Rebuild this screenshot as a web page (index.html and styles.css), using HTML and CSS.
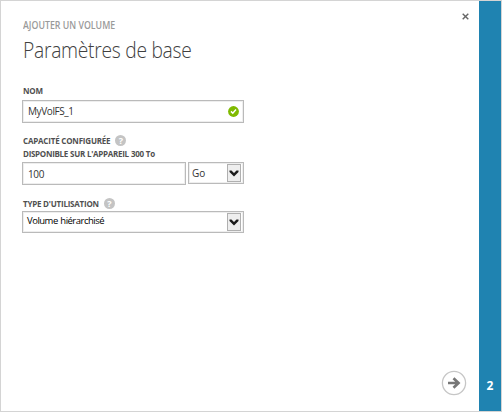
FILE: index.html
```html
<!DOCTYPE html>
<html lang="fr">
<head>
<meta charset="utf-8">
<title>Ajouter un volume</title>
<link rel="stylesheet" href="styles.css">
</head>
<body>
<div class="dialog">
  <main class="content">
    <header class="header">
      <p class="subtitle"><span>AJOUTER UN VOLUME</span></p>
      <h1 class="title"><span>Paramètres de base</span></h1>
    </header>
    <form class="form">
      <div class="label label-name"><span>NOM</span></div>
      <div class="field">
        <span class="value value-name">MyVolFS_1</span>
        <svg class="valid" viewBox="0 0 11 11"><circle cx="5.5" cy="5.5" r="5.4" fill="#7fba00"/><path d="M3 5.4l1.8 1.8L8 3.6" fill="none" stroke="#fff" stroke-width="1.5"/></svg>
      </div>
      <div class="label label-capacity"><span>CAPACITÉ CONFIGURÉE</span><i class="help">?</i></div>
      <div class="label label-available"><span>DISPONIBLE SUR L'APPAREIL 300 To</span></div>
      <div class="row">
        <div class="field amount"><span class="value value-amount">100</span></div>
        <div class="field select unit">
          <span class="value value-unit">Go</span>
          <span class="arrow"><svg viewBox="0 0 10 7"><path d="M.5.5h2L5 2.9 7.5.5h2v1.6L5 6.4.5 2.1z" fill="#1c1c1c"/></svg></span>
        </div>
      </div>
      <div class="label label-usage"><span>TYPE D'UTILISATION</span><i class="help">?</i></div>
      <div class="field select usage">
        <span class="value value-usage">Volume hiérarchisé</span>
        <span class="arrow"><svg viewBox="0 0 10 7"><path d="M.5.5h2L5 2.9 7.5.5h2v1.6L5 6.4.5 2.1z" fill="#1c1c1c"/></svg></span>
      </div>
    </form>
  </main>
  <aside class="controls">
    <svg class="close" viewBox="0 0 7 7"><path d="M.7.7l5.6 5.6M6.3.7L.7 6.3" stroke="#666" stroke-width="1.4"/></svg>
    <svg class="next" viewBox="0 0 26 26"><circle cx="13" cy="13" r="11.6" fill="#fff" stroke="#c6c6c6" stroke-width="1.3"/><path d="M7 13h11M12.5 8.2l5 4.8-5 4.8" fill="none" stroke="#777" stroke-width="2.7"/></svg>
  </aside>
  <div class="step">2</div>
</div>
</body>
</html>
```
FILE: styles.css
```css
* { box-sizing: border-box; }
body { margin: 0; font-family: "Open Sans", "Noto Sans", sans-serif; background: #fff; }
.dialog { display: flex; width: 502px; height: 412px; border: 1px solid #d4d4d4; }
.content { width: 243px; padding: 18px 0 0 21px; }
.subtitle, .title { margin: 0; white-space: nowrap; }
.subtitle span, .title span { display: inline-block; transform-origin: 0 50%; }
.subtitle { height: 13px; font-size: 10px; line-height: 13px; font-weight: 600; color: #9a9a9a; padding-left: 1px; }
.subtitle span { transform: scaleX(0.88); }
.title { height: 32px; margin-top: 2px; padding-left: 1px; font-size: 21.5px; line-height: 32px; font-weight: 300; color: #404040; letter-spacing: -0.3px; }
.title span { transform: scaleX(0.895); }
.form { padding-top: 18px; width: 222px; }
.label { display: flex; align-items: center; height: 13px; padding-left: 1px; font-size: 8px; line-height: 13px; font-weight: 700; color: #505050; white-space: nowrap; }
.label-name { margin-bottom: 3px; letter-spacing: -0.2px; }
.label-capacity { margin-top: 11px; letter-spacing: -0.2px; }
.label-available { margin-bottom: 2px; letter-spacing: -0.29px; word-spacing: 0.3px; }
.label-usage { margin-top: 12px; margin-bottom: 1px; letter-spacing: -0.22px; }
.help { width: 11px; height: 11px; margin-left: 5px; border-radius: 50%; background: #c4c4c4; color: #fff; font-size: 9px; line-height: 11px; font-style: normal; text-align: center; letter-spacing: 0; }
.field { display: flex; align-items: center; justify-content: space-between; height: 23px; border: 1px solid #bababa; box-shadow: inset 0 0 0 1px #eee; background: #fff; padding: 0 4px 0 5px; }
.value { font-size: 10px; color: #333; white-space: nowrap; }
.value-name { letter-spacing: -0.4px; padding-bottom: 1px; }
.value-amount { letter-spacing: -0.35px; }
.valid { width: 11px; height: 11px; }
.row { display: flex; gap: 2px; }
.amount { width: 164px; }
.unit { width: 56px; }
.select { height: 22px; padding: 0 2px 0 3px; }
.arrow { display: flex; align-items: center; justify-content: center; width: 14px; height: 18px; border: 1px solid #b0b0b0; background: #eee; }
.arrow svg { width: 10px; height: 7px; }
.usage { padding-left: 4px; }
.value-usage { color: #000; font-size: 9.5px; letter-spacing: -0.5px; word-spacing: 0.6px; padding-bottom: 3px; }
.controls { display: flex; flex-direction: column; justify-content: space-between; align-items: flex-end; flex: 1; padding: 12px 12px 15px 0; }
.close { width: 7px; height: 7px; margin-right: -2px; }
.next { width: 26px; height: 26px; }
.step { display: flex; align-items: flex-end; justify-content: center; width: 22px; padding-bottom: 16px; background: #1f83b1; color: #fff; font-size: 12px; line-height: 18px; font-weight: 700; }
```
